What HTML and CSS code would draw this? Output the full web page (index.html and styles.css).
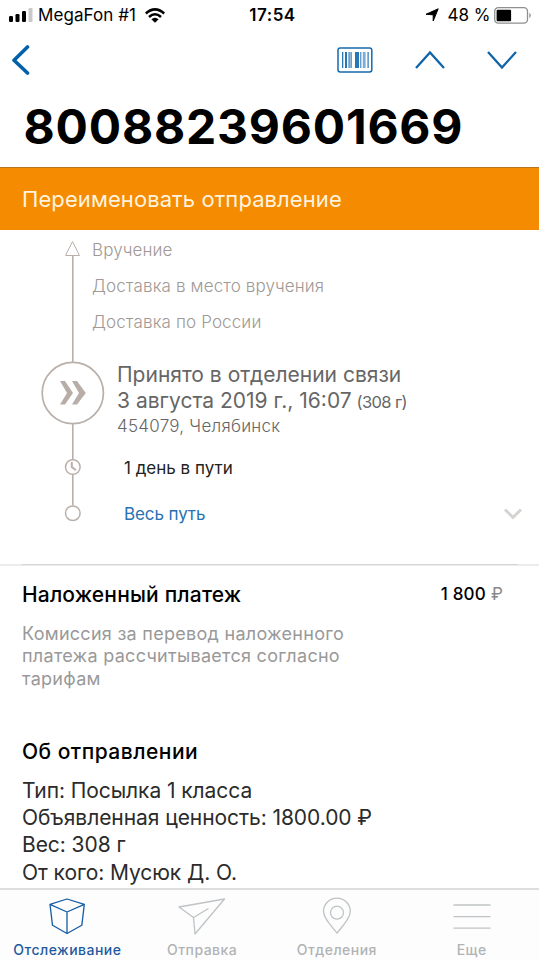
FILE: index.html
```html
<!DOCTYPE html>
<html lang="ru">
<head>
<meta charset="utf-8">
<title>80088239601669</title>
<link rel="stylesheet" href="styles.css">
</head>
<body>
<div class="phone">
  <div class="status-bar">
    <div class="carrier">
      <svg class="signal" width="24" height="16" viewBox="0 0 24 16"><g fill="#000"><rect x="0" y="9" width="4" height="6" rx="1.2"/><rect x="6.5" y="7" width="4" height="8" rx="1.2"/><rect x="13" y="4" width="4" height="11" rx="1.2"/></g><rect x="19.5" y="1" width="4" height="14" rx="1.2" fill="#c9c9c9"/></svg>
      <span class="carrier-name">MegaFon #1</span>
      <svg class="wifi" width="20" height="15" viewBox="0 0 20 15"><g fill="none" stroke="#000" stroke-width="2.5"><path d="M.8 5.5Q10-2.8 19.2 5.5"/><path d="M4 9Q10 3.4 16 9"/></g><path d="M6.4 11.2Q10 8.2 13.6 11.2L10 14.7Z"/></svg>
    </div>
    <div class="clock">17:54</div>
    <div class="power">
      <svg width="14" height="14" viewBox="0 0 14 14"><path d="M13.2.8 8.2 13V6.800L1 6.300Z" stroke="#000" stroke-width="1" stroke-linejoin="round"/></svg>
      <span class="percent">48 %</span>
      <svg width="38" height="17" viewBox="0 0 38 17"><rect x=".7" y=".7" width="32.8" height="15.4" rx="3.6" fill="#fff" stroke="#8f8f8f" stroke-width="1.3"/><rect x="2.6" y="2.8" width="14.5" height="11.4" rx="1.2"/><path d="M35.3 5.8Q38.4 8.4 35.3 11.2Z" fill="#8f8f8f"/></svg>
    </div>
  </div>
  <div class="nav">
    <svg class="back" width="20" height="32" viewBox="0 0 20 32"><path d="M17.500 3 4 16.200 17.500 29" fill="none" stroke="#0060a8" stroke-width="3.6" stroke-linecap="round" stroke-linejoin="round"/></svg>
    <svg class="barcode" width="36" height="26" viewBox="0 0 36 26"><rect x="1" y="1" width="33.8" height="24" rx="2.2" fill="#fff" stroke="#176aad" stroke-width="1.5"/><g fill="#2877b5"><path d="M5 5h1.3v16H5zM8 5h2v16H8zM11.5 5h1.2v16h-1.2zM13.5 5h1.2v16h-1.2zM18 5h4v16h-4zM23.3 5h1v16h-1zM30.5 5h1.2v16h-1.2z"/><path d="M25.8 5h2.8v16h-2.8z" fill="#78aedb"/></g></svg>
    <svg class="up" width="32" height="20" viewBox="0 0 32 20"><path d="M2 18 16 2.5 30 18" fill="none" stroke="#1065a8" stroke-width="2.3"/></svg>
    <svg class="down" width="32" height="20" viewBox="0 0 32 20"><path d="M2 2 16 17.5 30 2" fill="none" stroke="#1065a8" stroke-width="2.3"/></svg>
  </div>
  <h1 class="track">80088239601669</h1>
  <div class="rename"><span>Переименовать отправление</span></div>
  <div class="timeline">
    <svg class="rail" width="66" height="300" viewBox="0 0 66 300" fill="none" stroke="#b9b0aa" stroke-width="1.5">
      <path d="M32.5 11.5 39.5 25.5H25.5Z" stroke-width="1"/>
      <path d="M32.8 26V132M32.8 194V229.500M32.8 244.500V275.500" stroke-width="1.6"/>
      <circle cx="32.8" cy="163" r="30.600" stroke-width="1.7"/>
      <path d="M20 151H25L33 163 25 174.500H20L27 163ZM32 151H37L45.800 163 37 174.500H32L39 163Z" fill="#b9aea7" stroke="none"/>
      <circle cx="32.800" cy="237" r="7.300"/>
      <path d="M31.800 232V237L36 240.200" stroke-width="2"/>
      <circle cx="32.800" cy="283.200" r="7.300"/>
    </svg>
    <div class="events">
      <div class="future"><span>Вручение</span></div>
      <div class="future"><span>Доставка в место вручения</span></div>
      <div class="future"><span>Доставка по России</span></div>
      <div class="current">
        <div class="now"><span>Принято в отделении связи</span></div>
        <div class="now"><span>3 августа 2019 г., 16:07</span> <small>(308 г)</small></div>
        <div class="place"><span>454079, Челябинск</span></div>
      </div>
      <div class="days"><span>1 день в пути</span></div>
      <div class="all"><span>Весь путь</span>
        <svg width="20" height="14" viewBox="0 0 20 14"><path d="M2 2.500 10 10.500 18 2.500" fill="none" stroke="#d5d2d0" stroke-width="3"/></svg>
      </div>
    </div>
  </div>
  <div class="divider"></div>
  <div class="payment">
    <div class="pay-head"><h2 class="h-pay">Наложенный платеж</h2><div class="price"><b>1 800</b> <i>₽</i></div></div>
    <div class="note"><span>Комиссия за перевод наложенного</span></div>
    <div class="note"><span>платежа рассчитывается согласно</span></div>
    <div class="note"><span>тарифам</span></div>
  </div>
  <div class="about">
    <h2 class="h-about">Об отправлении</h2>
    <div class="line"><span>Тип: Посылка 1 класса</span></div>
    <div class="line"><span>Объявленная ценность: 1800.00 ₽</span></div>
    <div class="line"><span>Вес: 308 г</span></div>
    <div class="line"><span>От кого: Мусюк Д. О.</span></div>
  </div>
  <div class="tabs">
    <div class="tab active"><svg width="48" height="40" viewBox="0 0 48 40"><path d="M7 7.300 24 2 41.300 7.300 38.800 28.300 24 36.500 9.500 28.300ZM7 7.300 24 15 41.300 7.300M24 15V36.500"/></svg><span>Отслеживание</span></div>
    <div class="tab"><svg width="48" height="40" viewBox="0 0 48 40"><path d="M1 10 46.500 2 17 37 15.500 20.500ZM15.500 20.500 30.500 11.500"/></svg><span>Отправка</span></div>
    <div class="tab"><svg width="48" height="40" viewBox="0 0 48 40"><path d="M24 36.200C20 30.500 10.500 22 10.500 14.500A13.300 13.300 0 0 1 37.300 14.500C37.300 22 28 30.500 24 36.200Z"/><circle cx="24" cy="15.700" r="6.500"/></svg><span>Отделения</span></div>
    <div class="tab"><svg width="48" height="40" viewBox="0 0 48 40"><path d="M5.500 8H42.500M5.500 19.700H42.500M5.500 31.200H42.500"/></svg><span>Еще</span></div>
  </div>
</div>
</body>
</html>
```
FILE: styles.css
```css
* { box-sizing: border-box; }
body { margin: 0; background: #fff; font-family: Inter, "Liberation Sans", sans-serif; color: #000; }
h1, h2 { margin: 0; }
svg { display: block; flex: none; }
.phone { width: 539px; height: 960px; display: flex; flex-direction: column; overflow: hidden; white-space: nowrap; }
.phone > div, .phone > h1 { flex: none; }
.status-bar { height: 30px; padding: 0 7px 0 9px; display: grid; grid-template-columns: 1fr auto 1fr; align-items: center; font-size: 17px; }
.carrier { display: flex; align-items: center; }
.carrier-name { margin: 0 9px 0 5px; letter-spacing: 0.08px; }
.clock { font-weight: 600; letter-spacing: 0.5px; margin-left: 4px; }
.power { display: flex; align-items: center; justify-content: flex-end; }
.percent { margin: 0 3.500px 0 9px; }
.nav { height: 60px; display: flex; align-items: center; padding: 0 21px 0 10px; }
.barcode { margin-left: auto; }
.up { margin-left: 41.500px; }
.down { margin-left: 40px; }
.track { height: 77px; padding-left: 23.500px; font-size: 48px; line-height: 74px; font-weight: 700; letter-spacing: 0.8px; }
.rename { height: 63px; padding-left: 22px; background: #f58b00; border-top: 1px solid #b4771d; color: #fff3df; font-size: 22px; line-height: 62px; letter-spacing: 0.08px; }
.timeline { height: 334px; display: flex; padding-left: 40px; }
.rail { margin-right: -14px; }
.events { flex: 1; padding-top: 2px; }
.future { height: 36px; line-height: 36px; font-size: 17px; font-weight: 300; color: #a09995; letter-spacing: 0.13px; }
.current { padding: 22px 0 0 25px; }
.now { height: 25.500px; line-height: 26px; font-size: 21px; color: #666; letter-spacing: 0; }
.now small { font-size: 16.500px; letter-spacing: -0.6px; margin-left: -1px; }
.place { height: 24px; line-height: 26px; font-size: 17px; font-weight: 300; color: #666; letter-spacing: 0.25px; }
.days { padding-left: 32px; height: 46px; line-height: 46px; margin-top: 8px; font-size: 17px; color: #222; }
.all { padding: 0 16px 0 32px; height: 46px; display: flex; align-items: center; justify-content: space-between; font-size: 17px; letter-spacing: -0.1px; color: #2872b4; }
.divider { height: 2px; background: linear-gradient(#d4d4d4, #d4d4d4) 22px 0 / 496px 1px no-repeat, #ececec; }
.payment { height: 164px; padding: 10px 36px 0 22px; }
.pay-head { display: flex; justify-content: space-between; align-items: center; height: 36px; margin-bottom: 11px; }
h2 { font-size: 21px; font-weight: 500; }
.h-pay { letter-spacing: 0.17px; }
.price { font-size: 17px; letter-spacing: 0.2px; }
.price b { font-weight: 500; }
.price i { font-style: normal; color: #888; }
.note { height: 22.300px; line-height: 22.300px; font-size: 18px; letter-spacing: 0.28px; color: #999; }
.about { height: 158px; padding: 7px 0 0 22px; }
.h-about { height: 30px; line-height: 30px; margin-bottom: 9.700px; letter-spacing: 0.48px; }
.line { height: 27.400px; line-height: 27.400px; font-size: 21px; letter-spacing: -0.07px; color: #2b2b2b; }
.tabs { height: 72px; border-top: 2px solid #dedede; background: #fdfdfd; display: grid; grid-template-columns: repeat(4, 1fr); }
.tab { padding-top: 7px; display: flex; flex-direction: column; align-items: center; font-size: 14px; font-weight: 500; color: #b1b3b5; }
.tab svg { fill: none; stroke: #bfc3c5; stroke-width: 1.3; stroke-linejoin: round; }
.tab span { margin-top: 4px; line-height: 17px; letter-spacing: 0.48px; }
.tab.active { color: #1f5aa0; }
.tab.active svg { stroke: #155ca5; }
```
